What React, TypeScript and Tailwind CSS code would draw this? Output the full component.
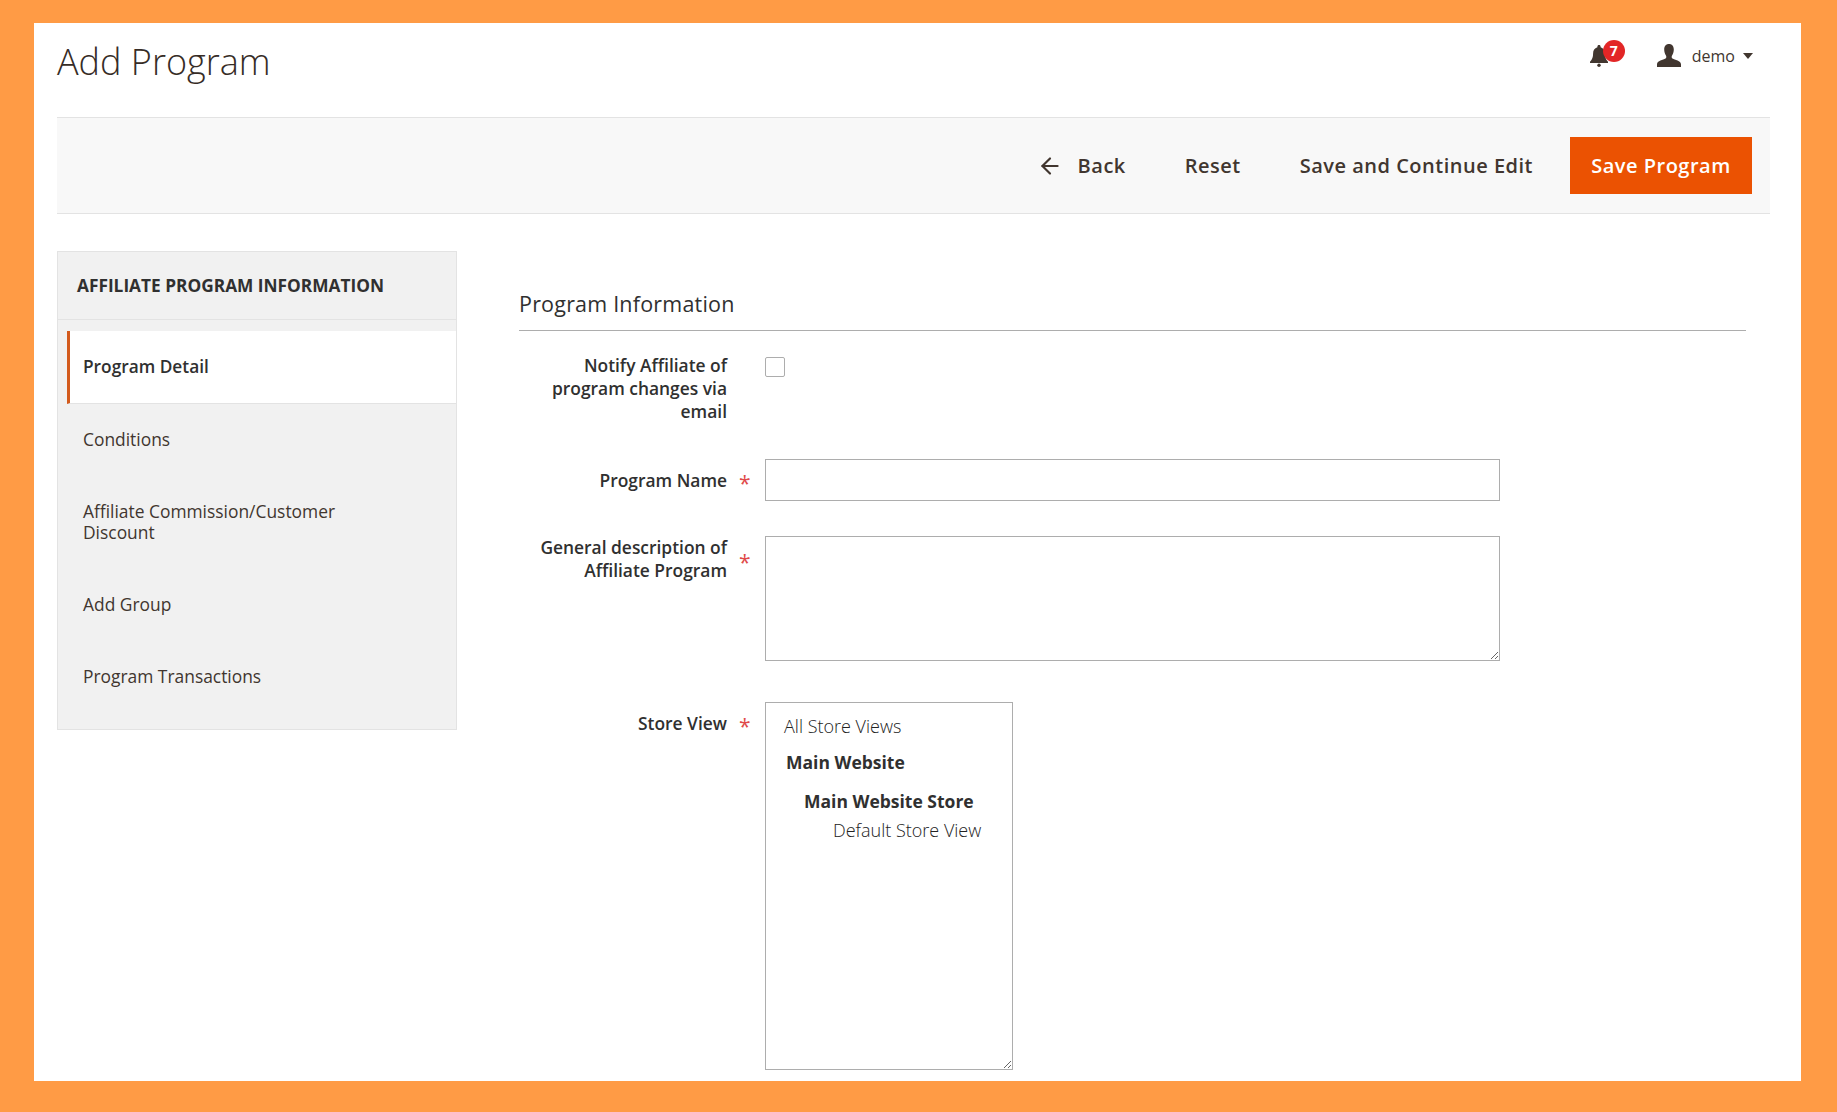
import { ArrowLeft } from 'lucide-react';

const font = 'font-["Open_Sans",sans-serif]';

function FieldLabel({
  children,
  required,
  starTop = 'top-[3px]',
}: {
  children: React.ReactNode;
  required?: boolean;
  starTop?: string;
}) {
  return (
    <label className="relative block w-[207px] shrink-0 text-right text-[17.4px] font-semibold leading-[23px] text-[#303030]">
      {children}
      {required && (
        <span className={`absolute left-[calc(100%+12px)] ${starTop} text-[#e04a4a] text-[21px] leading-[23px] font-normal`}>*</span>
      )}
    </label>
  );
}

const navItems = ['Conditions', 'Affiliate Commission/Customer Discount', 'Add Group', 'Program Transactions'];

function Sidebar() {
  return (
    <aside className="w-[400px] shrink-0 h-[479px] bg-[#f1f1f1] border border-[#e3e3e3]">
      <div className="h-[68px] flex items-center pl-[19px] text-[17.3px] font-bold text-[#303030] border-b border-[#e3e3e3]">
        AFFILIATE PROGRAM INFORMATION
      </div>
      <div className="h-[11px]" />
      <div className="ml-[9px] h-[73px] bg-white border-l-[3px] border-[#d35a1c] border-b border-b-[#e3e3e3] pl-[13px] flex items-center text-[17.3px] font-semibold text-[#303030]">
        Program Detail
      </div>
      <ul className="-mt-[1px] text-[17.4px] leading-[21px] text-[#41362f]">
        {navItems.map((item) => (
          <li key={item} className="pl-[25px] pr-[80px] py-[25.5px]">
            {item}
          </li>
        ))}
      </ul>
    </aside>
  );
}

function StoreView() {
  return (
    <div className="w-[248px] h-[368px] border border-[#adadad] overflow-auto resize pt-[12px] text-[18px] text-[#222222] whitespace-nowrap">
      <div className="pl-[18px] leading-[22px] font-light">All Store Views</div>
      <div className="pl-[20px] mt-[13px] leading-[24px] text-[17.5px] font-bold text-[#303030]">Main Website</div>
      <div className="pl-[38px] mt-[15px] leading-[24px] text-[17.5px] font-bold text-[#303030]">Main Website Store</div>
      <div className="pl-[67px] mt-[5px] leading-[24px] font-light">Default Store View</div>
    </div>
  );
}

function ProgramForm() {
  return (
    <section className="ml-[62px] w-[1227px]">
      <h2 className="h-[80px] pt-[38px] border-b border-[#adadad] text-[21.5px] leading-[30px] text-[#303030] tracking-[0.2px]">
        Program Information
      </h2>
      <div className="pl-[1px]">
        <div className="flex mt-[24px] h-[80px]">
          <div className="-mt-[1px]">
            <FieldLabel>
              Notify Affiliate of
              <br />
              program changes via
              <br />
              email
            </FieldLabel>
          </div>
          <div className="ml-[38px] mt-[2px] w-[20px] h-[20px] border border-[#adadad] rounded-[2px] bg-white" />
        </div>
        <div className="flex items-center mt-[24px]">
          <FieldLabel required>Program Name</FieldLabel>
          <input type="text" className="ml-[38px] w-[735px] h-[42px] border border-[#adadad] bg-white outline-none" />
        </div>
        <div className="flex mt-[35px]">
          <FieldLabel required starTop="top-[15px]">
            General description of
            <br />
            Affiliate Program
          </FieldLabel>
          <textarea className="ml-[38px] w-[735px] h-[125px] border border-[#adadad] bg-white outline-none block" />
        </div>
        <div className="flex mt-[41px]">
          <div className="w-[207px] shrink-0 pt-[10px]">
            <FieldLabel required>Store View</FieldLabel>
          </div>
          <div className="ml-[38px]">
            <StoreView />
          </div>
        </div>
      </div>
    </section>
  );
}

function HeaderActions() {
  return (
    <div className="flex items-center text-[#41362f] mr-[17px]">
      <div className="relative w-[18px] h-[22px]">
        <svg viewBox="0 0 18 22" className="w-[18px] h-[22px]" fill="#41362f">
          <path d="M9 0c1 0 1.600.7 1.600 1.700v.6c2.900.8 4.300 3.200 4.300 6.200 0 3.600.8 6 3.100 8.200v1.200H0v-1.200c2.300-2.200 3.100-4.600 3.100-8.200 0-3 1.400-5.400 4.300-6.200v-.6C7.400.7 8 0 9 0z" />
          <circle cx="9" cy="20.300" r="1.700" />
        </svg>
        <span className="absolute left-[13px] top-[-5px] w-[22px] h-[22px] rounded-full bg-[#e22626] text-white text-[14px] font-bold leading-[22px] text-center">
          7
        </span>
      </div>
      <svg viewBox="0 0 24 23" className="ml-[49px] -mt-[2px] w-[24px] h-[23px]" fill="#41362f">
        <path d="M12 0c3 0 4.800 2.200 4.800 5.300 0 2.400-.6 4.500-1.600 6-.7 1-.8 2.700.3 3.300 2.200 1.200 8.500 2.300 8.500 5.800V23H0v-2.600c0-3.500 6.300-4.600 8.500-5.800 1.100-.6 1-2.300.3-3.300-1-1.500-1.600-3.600-1.600-6C7.200 2.200 9 0 12 0z" />
      </svg>
      <span className="ml-[11px] text-[16px] leading-[22px]">demo</span>
      <span className="ml-[8px] w-0 h-0 border-x-[5px] border-x-transparent border-t-[6px] border-t-[#41362f]" />
    </div>
  );
}

export default function App() {
  return (
    <div className={`${font} min-h-screen bg-[#ff9b45] pt-[23px] pb-[30px] pl-[34px] pr-[36px]`}>
      <div className="bg-white h-[1058px] overflow-hidden px-[23px] pr-[31px]">
        <header className="h-[94px] flex justify-between">
          <h1 className="text-[36px] font-light leading-[50px] text-[#362c26] mt-[14px]">Add Program</h1>
          <div className="pt-[22px]">
            <HeaderActions />
          </div>
        </header>
        <div className="h-[97px] bg-[#f8f8f8] border-y border-[#e3e3e3] flex items-center justify-end pr-[18px]">
          <div className="flex items-center gap-[59px] text-[20px] font-semibold text-[#41362f] tracking-[0.5px]">
            <button className="flex items-center">
              <ArrowLeft size={26} strokeWidth={2} className="mr-[15px]" />
              Back
            </button>
            <button>Reset</button>
            <button>Save and Continue Edit</button>
          </div>
          <button className="ml-[37px] w-[182px] h-[57px] bg-[#eb5202] text-white text-[20px] font-semibold tracking-[0.5px]">
            Save Program
          </button>
        </div>
        <div className="flex mt-[37px]">
          <Sidebar />
          <ProgramForm />
        </div>
      </div>
    </div>
  );
}
